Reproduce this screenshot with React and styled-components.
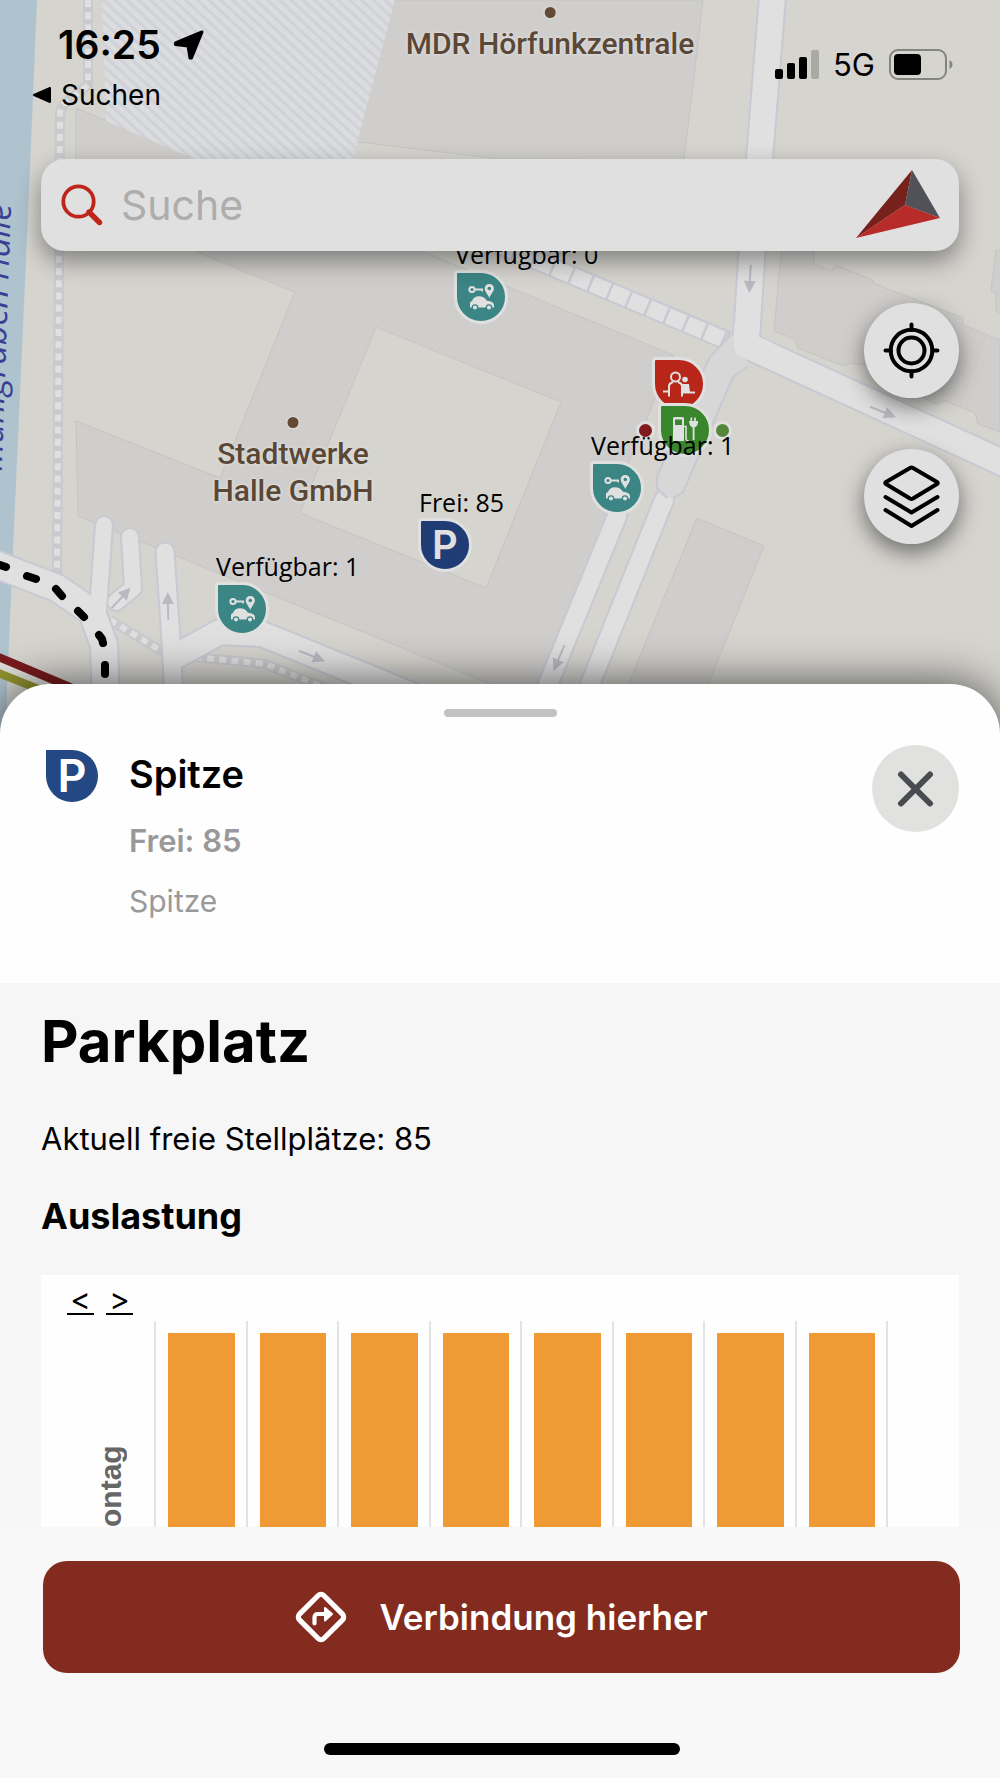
import React from "react";
import styled, { createGlobalStyle } from "styled-components";

const sans = `Inter, "Liberation Sans", sans-serif`;

const GlobalStyle = createGlobalStyle`
  *, *::before, *::after { box-sizing: border-box; }
  body { margin: 0; background: #f6f6f6; font-family: ${sans}; color: #000; }
  h1, h2, p { margin: 0; }
`;

const Screen = styled.main`
  height: 100vh;
  display: flex;
  flex-direction: column;
  overflow: hidden;
`;

/* ---------- Map ---------- */

const MapArea = styled.section`
  position: relative;
  flex: none;
  padding: 0 41px 190px;
  background: #d5d4cf;
  overflow: hidden;
`;

const MapCanvas = styled.svg`
  position: absolute;
  inset: 0;
  width: 100%;
  height: 100%;
`;

const Pin = styled.div`
  position: absolute;
  left: ${(p) => p.$x}px;
  top: ${(p) => p.$y}px;
  width: 54px;
  height: 54px;
  border: 3px solid #e0e0e0;
  border-radius: 4px 50% 50% 50%;
  background: ${(p) => p.$color};
  color: #e0e0e0;
  display: flex;
  align-items: center;
  justify-content: center;
  font-size: 40px;
  line-height: 48px;
  font-weight: 600;
`;

const PinLabel = styled.span`
  position: absolute;
  left: -2px;
  bottom: 51px;
  font: 400 25px/32px "Open Sans", "Noto Sans", sans-serif;
  color: #000;
  white-space: nowrap;
`;

const StatusDot = styled.span`
  position: absolute;
  left: ${(p) => p.$x}px;
  top: ${(p) => p.$y}px;
  width: 19px;
  height: 19px;
  border: 3px solid #e0e0e0;
  border-radius: 50%;
  background: ${(p) => p.$color};
`;

const Place = styled.div`
  position: absolute;
  left: ${(p) => p.$x}px;
  top: ${(p) => p.$y}px;
  transform: translateX(-50%);
  display: flex;
  flex-direction: column;
  align-items: center;
  gap: 7px;
  font: 500 30px/37px Roboto, "Open Sans", sans-serif;
  color: #5a4736;
  text-align: center;
  white-space: pre-line;
  text-shadow: 0 0 3px #e0e0e0, 0 0 3px #e0e0e0;

  &::before {
    content: "";
    width: 11px;
    height: 11px;
    border-radius: 50%;
    background: #644a35;
    box-shadow: 0 0 2px 1px #dedddb;
  }
`;

/* ---------- Status bar ---------- */

const StatusBar = styled.header`
  position: relative;
  height: 159px;
  padding-top: 23px;
  margin: 0 6px 0 -8px;
  display: flex;
  justify-content: space-between;
  align-items: flex-start;
`;

const StatusLeft = styled.div`
  display: flex;
  flex-direction: column;
  gap: 10px;
`;

const Clock = styled.div`
  display: flex;
  align-items: center;
  gap: 12px;
  padding-left: 25px;
  font-size: 39px;
  line-height: 44px;
  font-weight: 600;
`;

const BackLink = styled.a`
  display: flex;
  align-items: center;
  gap: 9px;
  font-size: 28px;
  line-height: 36px;
  color: #000;
  text-decoration: none;
`;

const StatusRight = styled.div`
  display: flex;
  align-items: center;
  gap: 14px;
  padding-top: 24px;
  font-size: 31px;
  line-height: 36px;
`;

/* ---------- Search and map controls ---------- */

const SearchBar = styled.form`
  position: relative;
  display: flex;
  align-items: center;
  gap: 18px;
  height: 92px;
  padding: 0 18px 0 20px;
  border-radius: 24px;
  background: #e0e0e0;
  box-shadow: 0 10px 24px rgba(0, 0, 0, 0.4);
`;

const SearchInput = styled.input`
  flex: 1;
  min-width: 0;
  border: 0;
  outline: 0;
  padding: 0;
  background: none;
  font: 400 41px/52px ${sans};
  color: #000;

  &::placeholder { color: #adadad; opacity: 1; }
`;

const Bare = styled.button`
  display: flex;
  padding: 0;
  border: 0;
  background: none;
  color: inherit;
  cursor: pointer;
`;

const MapControls = styled.div`
  position: relative;
  display: flex;
  flex-direction: column;
  align-items: flex-end;
  gap: 51px;
  padding-top: 52px;
`;

const RoundButton = styled.button`
  display: flex;
  align-items: center;
  justify-content: center;
  width: 95px;
  height: 95px;
  padding: 0;
  border: 0;
  border-radius: 50%;
  background: #e0e0e0;
  color: #000;
  box-shadow: 0 8px 22px rgba(0, 0, 0, 0.5);
  cursor: pointer;
`;

/* ---------- Bottom sheet ---------- */

const Sheet = styled.section`
  position: relative;
  flex: 1;
  min-height: 0;
  margin-top: -50px;
  display: flex;
  flex-direction: column;
  border-radius: 50px 50px 0 0;
  background: #fefefe;
  box-shadow: 0 0 46px rgba(0, 0, 0, 0.66);
`;

const Handle = styled.div`
  flex: none;
  align-self: center;
  width: 113px;
  height: 8px;
  margin-top: 25px;
  border-radius: 4px;
  background: #c1c3c0;
`;

const SheetHeader = styled.header`
  display: flex;
  align-items: flex-start;
  gap: 31px;
  padding: 28px 41px 60px 46px;
`;

const IconSlot = styled.div`
  display: flex;
  align-items: center;
  height: 62px;
`;

const ParkingBadge = styled.div`
  display: flex;
  align-items: center;
  justify-content: center;
  width: 52px;
  height: 52px;
  border-radius: 0 50% 50% 50%;
  background: #234884;
  color: #fff;
  font-size: 45px;
  line-height: 52px;
  font-weight: 600;
`;

const Summary = styled.div`
  flex: 1;
  display: flex;
  flex-direction: column;
  gap: 16px;
`;

const Title = styled.h2`
  font-size: 38px;
  line-height: 58px;
  font-weight: 600;
`;

const Subtitle = styled.p`
  font-size: ${(p) => (p.$strong ? 31 : 30)}px;
  line-height: 44px;
  font-weight: ${(p) => (p.$strong ? 600 : 400)};
  color: #999;
`;

const CloseButton = styled.button`
  display: flex;
  align-items: center;
  justify-content: center;
  width: 87px;
  height: 87px;
  padding: 0;
  border: 0;
  border-radius: 50%;
  background: #e1e1df;
  color: #484c50;
  cursor: pointer;
`;

const Details = styled.div`
  flex: 1;
  min-height: 0;
  overflow-y: auto;
  scrollbar-width: none;
  padding: 22px 41px 0;
  background: #f6f6f6;
`;

const Heading = styled.h1`
  font-size: 58px;
  line-height: 72px;
  font-weight: 700;
`;

const Text = styled.p`
  margin-top: 42px;
  font-size: 31px;
  line-height: 40px;
`;

const SubHeading = styled.h2`
  margin-top: 35px;
  font-size: 36px;
  line-height: 44px;
  font-weight: 700;
`;

/* ---------- Chart ---------- */

const Chart = styled.figure`
  margin: 37px 0 0;
  background: #fefefe;
`;

const Pager = styled.nav`
  display: flex;
  gap: 12px;
  padding: 9px 26px 6px;
`;

const PagerLink = styled.a`
  width: 27px;
  border-bottom: 2px solid #000;
  font-size: 31px;
  line-height: 29px;
  text-align: center;
  color: #000;
  text-decoration: none;
`;

const Plot = styled.div`
  display: flex;
  height: 380px;
  padding-right: 71px;
`;

const AxisTitle = styled.figcaption`
  flex: none;
  width: 113px;
  padding: 0 27px 124px 0;
  display: flex;
  align-items: center;
  writing-mode: vertical-rl;
  transform: rotate(180deg);
  justify-content: flex-end;
  font: 700 30px/36px "Liberation Sans", Arial, sans-serif;
  color: #666;
`;

const Columns = styled.div`
  flex: 1;
  display: grid;
  grid-template-columns: repeat(8, 1fr);
  border-right: 2px solid #e3e3e3;
`;

const Column = styled.div`
  padding: 12px 11px 0 12px;
  border-left: 2px solid #e3e3e3;
`;

const Bar = styled.div`
  height: 100%;
  background: #f09a36;
`;

/* ---------- Footer ---------- */

const Footer = styled.footer`
  flex: none;
  display: flex;
  flex-direction: column;
  align-items: center;
  gap: 70px;
  padding: 34px 40px 23px 43px;
  background: #f8f8f8;
`;

const PrimaryButton = styled.button`
  width: 100%;
  height: 112px;
  display: flex;
  align-items: center;
  justify-content: center;
  gap: 32px;
  padding: 0;
  border: 0;
  border-radius: 24px;
  background: #842b20;
  color: #fff;
  font: 600 35px/44px ${sans};
  cursor: pointer;
`;

const HomeIndicator = styled.div`
  width: 356px;
  height: 12px;
  border-radius: 6px;
  background: #000;
`;

/* ---------- Icons ---------- */

const LocationArrow = () => (
  <svg width="32" height="32" viewBox="0 0 32 32" fill="currentColor" stroke="currentColor" strokeWidth="3" strokeLinejoin="round" aria-hidden="true">
    <path d="M29 3 2.500 14 2.500 15.500 15 17 17 29 18.500 29Z" />
  </svg>
);

const BackTriangle = () => (
  <svg width="19" height="18" viewBox="0 0 19 18" aria-hidden="true">
    <path d="M1 9 17 2V16Z" stroke="#000" strokeWidth="2" strokeLinejoin="round" />
  </svg>
);

const Signal = () => (
  <svg width="44" height="30" viewBox="0 0 44 30" aria-hidden="true">
    <rect x="0" y="19" width="8" height="10" rx="2" />
    <rect x="12" y="13" width="8" height="16" rx="2" />
    <rect x="24" y="7" width="8" height="22" rx="2" />
    <rect x="36" y="0" width="8" height="29" rx="2" fill="#a9a9a5" />
  </svg>
);

const Battery = () => (
  <svg width="64" height="32" viewBox="0 0 64 32" aria-hidden="true">
    <rect x="1" y="1" width="56" height="29" rx="8" fill="none" stroke="#858580" strokeWidth="2" />
    <rect x="5" y="5" width="27" height="21" rx="4" />
    <path d="M60.500 11c4 2 4 7 0 9z" fill="#858580" />
  </svg>
);

const Magnifier = () => (
  <svg width="42" height="42" viewBox="0 0 42 42" fill="none" stroke="#bf261b" aria-hidden="true">
    <circle cx="17.500" cy="17.500" r="15.200" strokeWidth="3.800" />
    <path d="M28 28 38.500 38.500" strokeWidth="5.400" strokeLinecap="round" />
  </svg>
);

const ArrowLogo = () => (
  <svg width="86" height="70" viewBox="0 0 86 70" aria-hidden="true">
    <path d="M57 0 1 68 50 35Z" fill="#76211b" />
    <path d="M57 0 85 48 50 35Z" fill="#505257" />
    <path d="M1 68 85 48 50 35Z" fill="#b72b28" />
  </svg>
);

const Crosshair = () => (
  <svg width="58" height="58" viewBox="0 0 58 58" fill="none" stroke="currentColor" strokeWidth="4" strokeLinecap="round" aria-hidden="true">
    <circle cx="28.500" cy="28.500" r="20.800" />
    <circle cx="28.500" cy="28.500" r="13" />
    <path d="M28.500 2.500V8M28.500 49.500v5M2.500 28.500H8M49.500 28.500h5" />
  </svg>
);

const Layers = () => (
  <svg width="58" height="64" viewBox="0 0 58 64" fill="none" stroke="currentColor" strokeWidth="4" strokeLinecap="round" strokeLinejoin="round" aria-hidden="true">
    <path d="M27 3 3 17Q1.500 18 3 19L27 33.500Q28.500 34.300 30 33.500L54 19Q55.500 18 54 17L30 3Q28.500 2.200 27 3Z" />
    <path d="M2.500 32 28.500 47.500 54.500 32M2.500 45 28.500 61 54.500 45" />
  </svg>
);

const Cross = () => (
  <svg width="38" height="38" viewBox="0 0 38 38" stroke="currentColor" strokeWidth="6" strokeLinecap="round" aria-hidden="true">
    <path d="M4 4.500 33 33.500M33 4.500 4 33.500" />
  </svg>
);

const Directions = () => (
  <svg width="52" height="52" viewBox="0 0 52 52" fill="none" stroke="currentColor" strokeLinejoin="round" strokeLinecap="round" aria-hidden="true">
    <rect x="8.800" y="8.800" width="34.400" height="34.400" rx="4" strokeWidth="5.200" transform="rotate(45 26 26)" />
    <path d="M19.500 32.500v-6q0-3.500 3.500-3.500h7" strokeWidth="4.200" />
    <path d="M30 17 37 23 30 29.500Z" fill="currentColor" strokeWidth="2" />
  </svg>
);

const CarSharing = () => (
  <svg width="48" height="48" viewBox="0 0 48 48" fill="currentColor" aria-hidden="true">
    <circle cx="15" cy="16.500" r="2.600" fill="none" stroke="currentColor" strokeWidth="2" />
    <path d="M18 15.500h8v3h-1.500v-1H18zM32.300 11c-2.700 0-4.600 2-4.600 4.500 0 3 2.600 4.800 4.600 9.500 2-4.700 4.600-6.500 4.600-9.500 0-2.500-1.900-4.500-4.600-4.500z" />
    <circle cx="32.300" cy="15.500" r="1.800" fill="#3b8585" />
    <path d="M13 34.500v-4.500q0-1.500 2-2 1.500-4.500 7-4.700 5 0 8 4.400 7 .5 7 4.500v2.300z" />
    <circle cx="18" cy="34.500" r="2.700" stroke="#3b8585" strokeWidth="1.300" />
    <circle cx="32" cy="34.500" r="2.700" stroke="#3b8585" strokeWidth="1.300" />
  </svg>
);

const ServicePoint = () => (
  <svg width="48" height="48" viewBox="0 0 48 48" fill="none" stroke="currentColor" strokeWidth="2" aria-hidden="true">
    <circle cx="20.500" cy="17" r="4.500" />
    <path d="M8 31.500h6M14 36.500V26q0-2.500 4-4M23 22q4 1.500 4 4v10.500M27 32.500h13" />
    <circle cx="30" cy="19.500" r="2.800" fill="currentColor" stroke="none" />
    <path d="M26.500 24h7.500l1 8h-7z" fill="currentColor" stroke="none" />
  </svg>
);

const Charging = () => (
  <svg width="48" height="48" viewBox="0 0 48 48" fill="currentColor" aria-hidden="true">
    <path fillRule="evenodd" d="M13.500 11h8q1.500 0 1.500 1.500V35H12V12.500q0-1.500 1.500-1.500zM14 13.500V19h7v-5.500z" />
    <path d="M23 20.500h2V33q1 2.500 3 2" fill="none" stroke="currentColor" strokeWidth="1.600" />
    <path d="M28 15h1.500v-3.500h1.700V15h2v-3.500h1.700V15H37v1.500q-.5 4-3.500 5V34h-1.800V21.500q-3-1-3.500-5z" />
  </svg>
);

const road = "#e0e0e0";
const edge = "#c8c9d2";
const building = "#cfcecc";
const outline = "#c4c4c1";

const Road = ({ d, width }) => (
  <path d={d} fill="none" stroke={road} strokeWidth={width} strokeLinecap="round" strokeLinejoin="round" />
);

const RoadEdge = ({ d, width }) => (
  <path d={d} fill="none" stroke={edge} strokeWidth={width + 4} strokeLinecap="round" strokeLinejoin="round" />
);

const Footway = ({ d }) => (
  <g fill="none">
    <path d={d} stroke="#c9cacd" strokeWidth="10" />
    <path d={d} stroke={road} strokeWidth="6" strokeDasharray="7 5.200" />
  </g>
);

const Arrow = ({ x, y, angle }) => (
  <g transform={`translate(${x} ${y}) rotate(${angle})`} fill="#b9bac1">
    <rect x="-14" y="-1" width="18" height="2" />
    <path d="M2-6 14 0 2 6Z" />
  </g>
);

const roads = [
  { d: "M773-10 752 252 746 345 1010 466", width: 25 },
  { d: "M617 516 545 692", width: 18 },
  { d: "M664 500 587 692", width: 18 },
  { d: "M-10 562 0 566 57 588 92 612 104 645 107 740", width: 26 },
  { d: "M104 525 98 610", width: 16 },
  { d: "M130 537 133 588 116 602", width: 16 },
  { d: "M165 552 171 640 176 740", width: 17 },
  { d: "M178 655 220 632 262 634 390 686 460 716", width: 24 },
];

const MapDrawing = () => (
  <MapCanvas viewBox="0 0 1000 734" preserveAspectRatio="xMidYMid slice" aria-hidden="true">
    <defs>
      <pattern id="hatch" width="8" height="8" patternUnits="userSpaceOnUse" patternTransform="rotate(43)">
        <rect width="8" height="8" fill="#dbdcde" />
        <rect width="8" height="3" fill="#d0d1d9" />
      </pattern>
    </defs>
    <path d="M0 0H37L32 120 26 260 13 550 7 690V740H0Z" fill="#afc3ce" />
    <g fill={building} stroke={outline}>
      <path d="M395 0H703L684 160 500 159 350 141Z" />
      <path d="M76 108 673 355 530 700 78 516 76 421 220 478 295 292 76 203Z" />
      <path d="M376 327 561 402 486 588 300 513Z" fill="#d5d4cf" />
      <path d="M783 230 774 331 794 339 798 348 843 366 853 363 870 366 935 404 945 401 975 413 978 424 1000 432V340L963 325V318L873 283V280L835 265 832 271 814 264V230Z" />
      <path d="M996 250 991 291 996 293V311L1002 314V250Z" />
      <path d="M697 518 764 546 706 690H626Z" />
    </g>
    <path d="M985 337 960 404" stroke={outline} strokeDasharray="2 3" />
    <path d="M102 0H395L350 170H220L106 121Z" fill="url(#hatch)" />
    <Footway d="M88 0V85L64 104 60 112 57 575" />
    <Footway d="M110 620 163 652" />
    <Footway d="M195 657 265 664 330 690" />
    <path d="M440 220 728 341" stroke={edge} strokeWidth="20" />
    <path d="M440 220 725 340" stroke={road} strokeWidth="16" strokeDasharray="18 2.600" />
    {roads.map((r) => <RoadEdge key={r.d} {...r} />)}
    {roads.map((r) => <Road key={r.d} {...r} />)}
    <path d="M731 335 710 357 700 377 657 477V488L667 498H673L683 492 733 377 746 367 750 340Z" fill="#d8d7d8" />
    <path d="M731 335 710 357 700 377 657 477V488L667 498M673 498 683 492 733 377 747 367" fill="none" stroke={edge} strokeWidth="2" />
    <path d="M747 325 746 345 765 353" fill="none" stroke={road} strokeWidth="25" strokeLinecap="round" strokeLinejoin="round" />
    <Arrow x={750} y={279} angle={93} />
    <Arrow x={883} y={412} angle={22} />
    <Arrow x={559} y={658} angle={113} />
    <Arrow x={168} y={606} angle={-91} />
    <Arrow x={121} y={598} angle={-47} />
    <Arrow x={312} y={656} angle={22} />
    <path d="M0 565 6 567M27 576 36 579M56 589 62 596M78 611 84 617M99 635 102 639 103 643M105 665V674" fill="none" stroke="#000" strokeWidth="8" strokeLinecap="round" strokeLinejoin="round" />
    <path d="M-4 665 60 692" stroke="#dededa" strokeWidth="16" />
    <path d="M-4 656 82 692" stroke="#7a1b1e" strokeWidth="8" />
    <path d="M-4 672 46 692" stroke="#92922f" strokeWidth="8" />
    <text x="11" y="204" textAnchor="end" transform="rotate(-88 11 204)" fontFamily="Open Sans, Noto Sans, sans-serif" fontStyle="italic" fontSize="34" fill="#3a3f95">Mühlgraben Halle</text>
  </MapCanvas>
);

const occupancy = [100, 100, 100, 100, 100, 100, 100, 100];

export default function App() {
  return (
    <Screen>
      <GlobalStyle />
      <MapArea aria-label="Karte">
        <MapDrawing />
        <Place $x={550} $y={7}>MDR Hörfunkzentrale</Place>
        <Place $x={293} $y={417}>{"Stadtwerke\nHalle GmbH"}</Place>
        <Pin $x={652} $y={357} $color="#b82519"><ServicePoint /></Pin>
        <Pin $x={658} $y={403} $color="#3a862c"><Charging /></Pin>
        <StatusDot $x={636} $y={421} $color="#821a1d" />
        <StatusDot $x={713} $y={421} $color="#54873a" />
        <Pin $x={454} $y={270} $color="#3b8585"><PinLabel>Verfügbar: 0</PinLabel><CarSharing /></Pin>
        <Pin $x={590} $y={461} $color="#3b8585"><PinLabel>Verfügbar: 1</PinLabel><CarSharing /></Pin>
        <Pin $x={215} $y={582} $color="#3b8585"><PinLabel>Verfügbar: 1</PinLabel><CarSharing /></Pin>
        <Pin $x={418} $y={518} $color="#1f3c74"><PinLabel>Frei: 85</PinLabel>P</Pin>

        <StatusBar>
          <StatusLeft>
            <Clock>16:25<LocationArrow /></Clock>
            <BackLink href="#suchen"><BackTriangle />Suchen</BackLink>
          </StatusLeft>
          <StatusRight><Signal />5G<Battery /></StatusRight>
        </StatusBar>

        <SearchBar role="search" onSubmit={(e) => e.preventDefault()}>
          <Magnifier />
          <SearchInput type="text" placeholder="Suche" aria-label="Suche" />
          <Bare type="button" aria-label="Menü"><ArrowLogo /></Bare>
        </SearchBar>

        <MapControls>
          <RoundButton type="button" aria-label="Mein Standort"><Crosshair /></RoundButton>
          <RoundButton type="button" aria-label="Kartenebenen"><Layers /></RoundButton>
        </MapControls>
      </MapArea>

      <Sheet>
        <Handle />
        <SheetHeader>
          <IconSlot><ParkingBadge>P</ParkingBadge></IconSlot>
          <Summary>
            <Title>Spitze</Title>
            <Subtitle $strong>Frei: 85</Subtitle>
            <Subtitle>Spitze</Subtitle>
          </Summary>
          <CloseButton type="button" aria-label="Schließen"><Cross /></CloseButton>
        </SheetHeader>

        <Details>
          <Heading>Parkplatz</Heading>
          <Text>Aktuell freie Stellplätze: 85</Text>
          <SubHeading>Auslastung</SubHeading>
          <Chart>
            <Pager aria-label="Wochentag">
              <PagerLink href="#zurueck">&lt;</PagerLink>
              <PagerLink href="#weiter">&gt;</PagerLink>
            </Pager>
            <Plot>
              <AxisTitle>Montag</AxisTitle>
              <Columns>
                {occupancy.map((value, i) => (
                  <Column key={i}><Bar style={{ height: `${value}%` }} /></Column>
                ))}
              </Columns>
            </Plot>
          </Chart>
        </Details>

        <Footer>
          <PrimaryButton type="button"><Directions />Verbindung hierher</PrimaryButton>
          <HomeIndicator />
        </Footer>
      </Sheet>
    </Screen>
  );
}
